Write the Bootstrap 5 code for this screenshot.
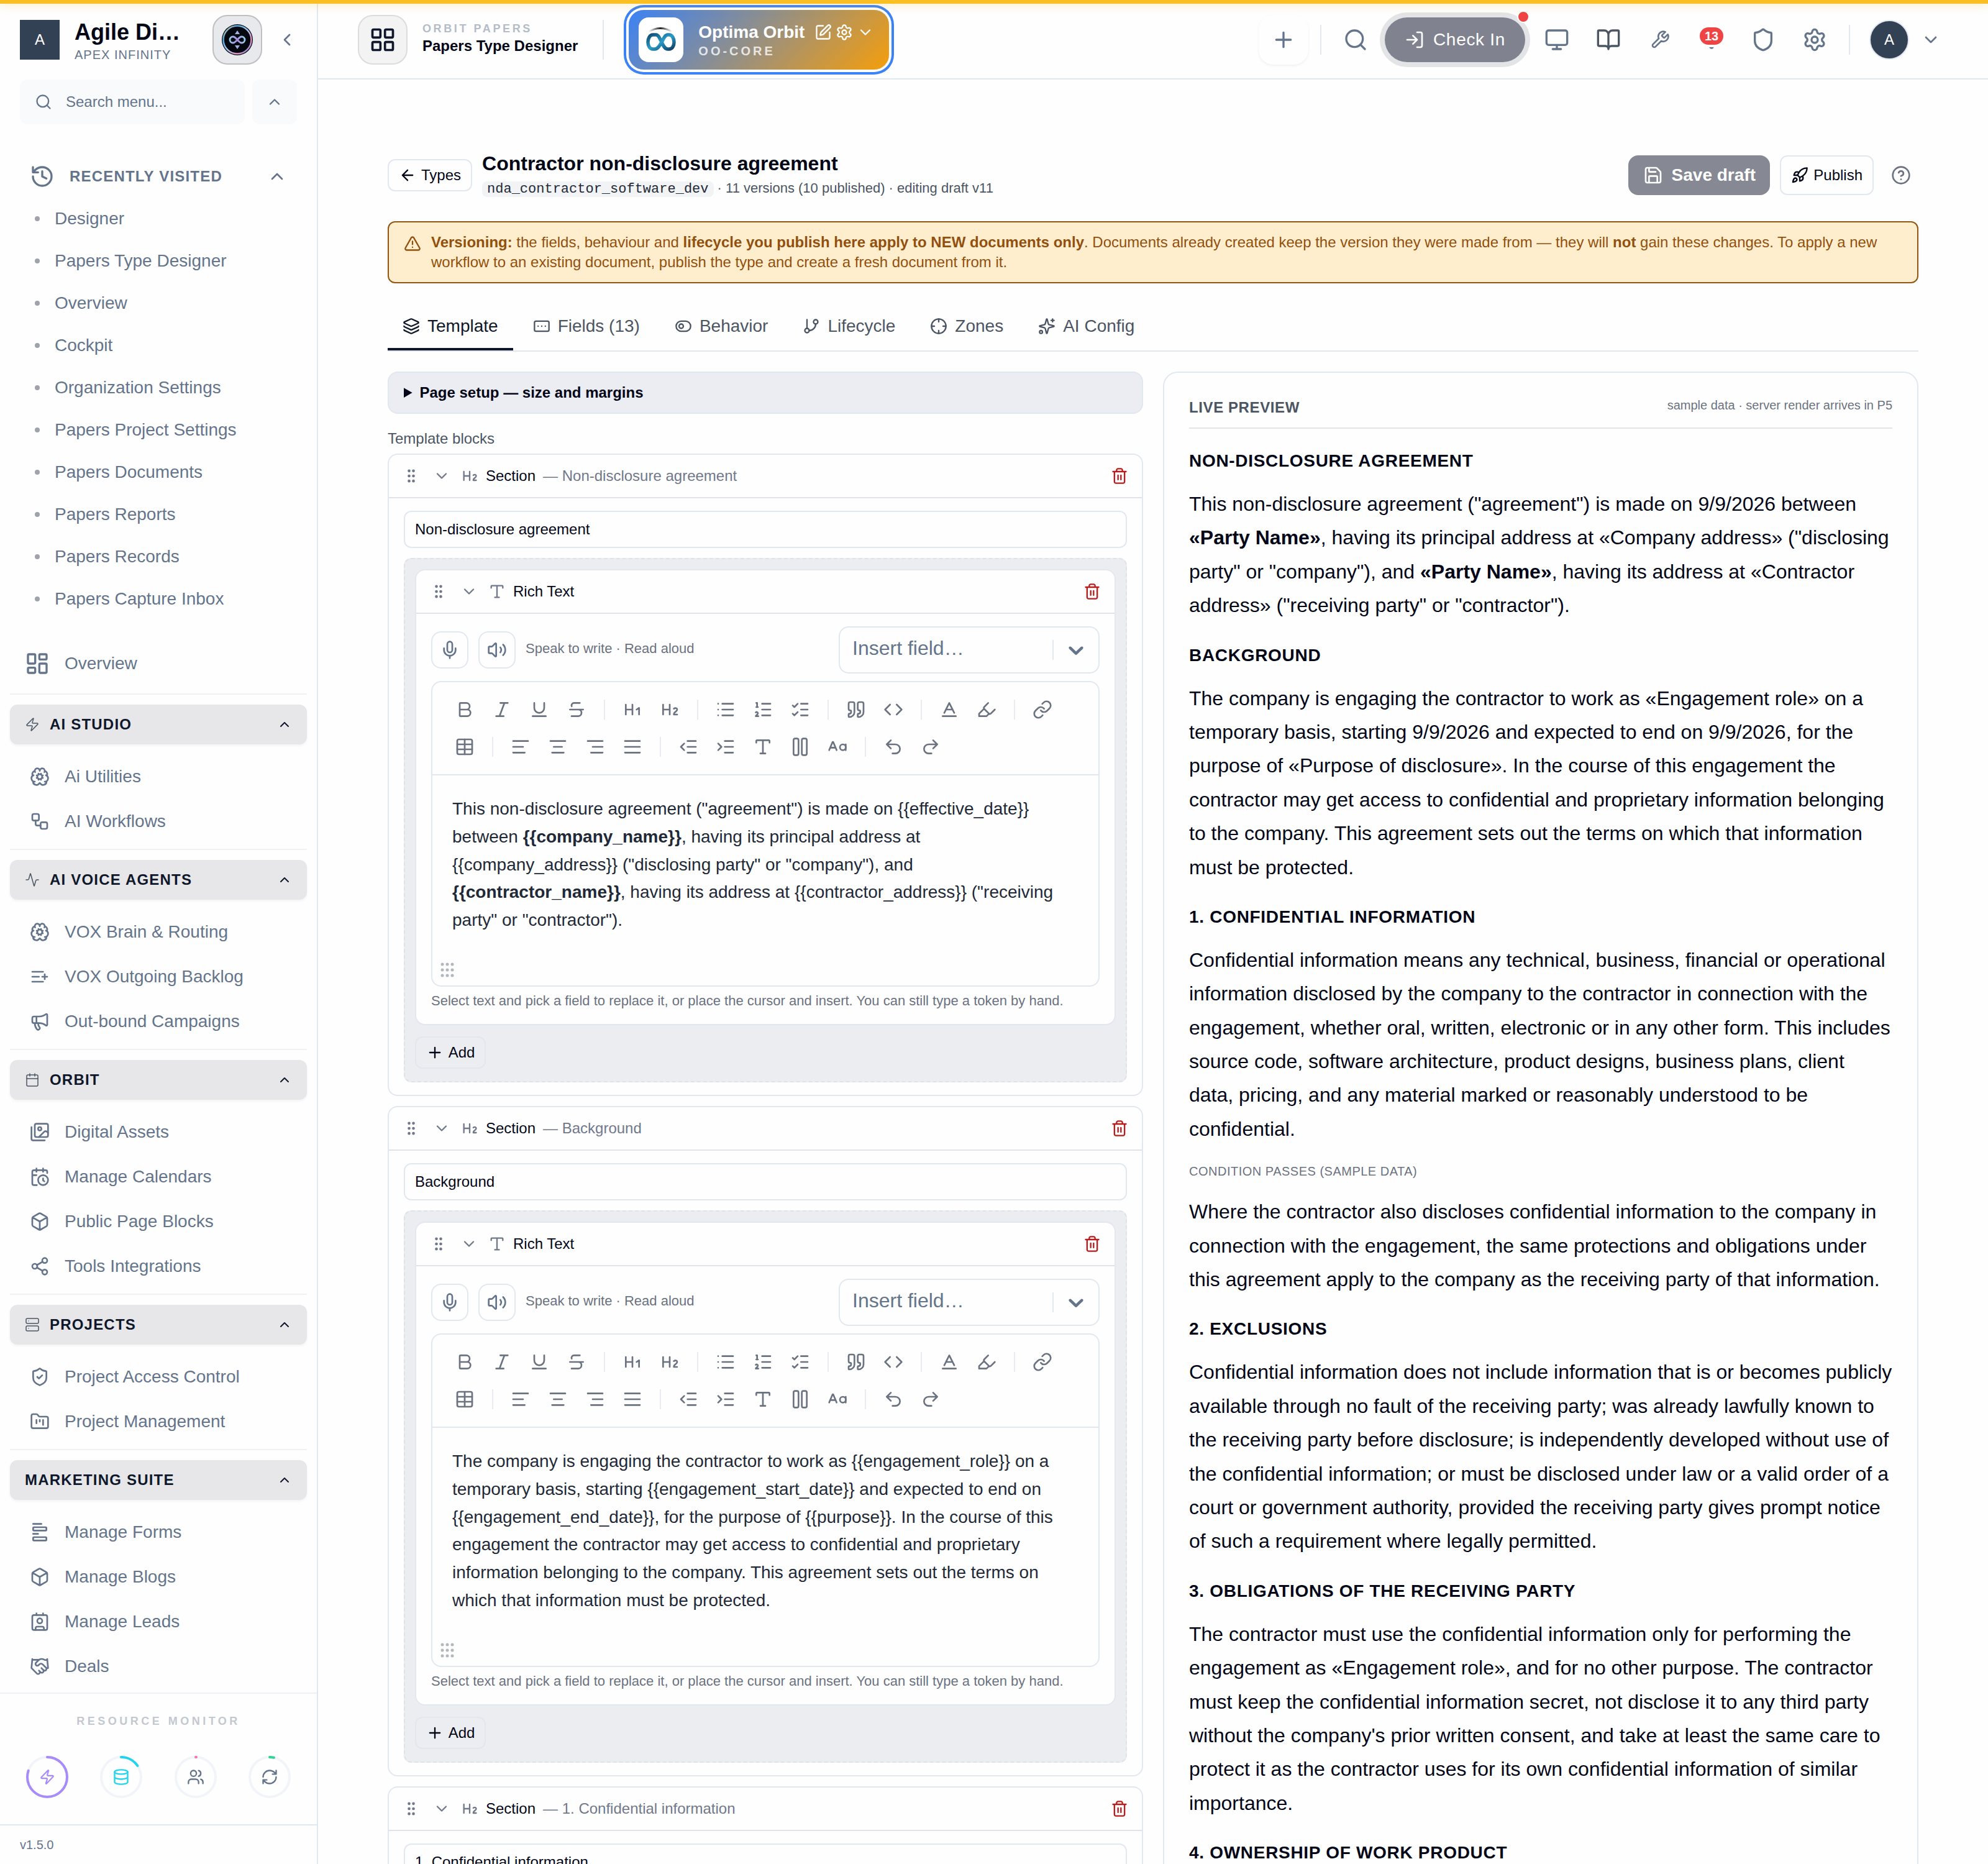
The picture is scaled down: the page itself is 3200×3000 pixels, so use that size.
<!DOCTYPE html>
<html lang="en">
<head>
<meta charset="utf-8">
<meta name="viewport" content="width=device-width, initial-scale=1">
<title>Papers Type Designer</title>
<link href="https://cdn.jsdelivr.net/npm/bootstrap@5.3.0/dist/css/bootstrap.min.css" rel="stylesheet">
<style>
:root{--line:#e2e8f0;--slate:#64748b;--ink:#020617}
body{font-family:"Liberation Sans",Arial,sans-serif;font-size:24px;line-height:32px;color:var(--ink);background:#fefefe;overflow:hidden}
a{text-decoration:none;color:inherit}
button{font:inherit;color:inherit;background:none;border:0;padding:0}
.ic{fill:none;stroke:currentColor;stroke-width:2;stroke-linecap:round;stroke-linejoin:round;flex:none;width:28px;height:28px;display:block}
.i24{width:24px;height:24px}.i32{width:32px;height:32px}.i40{width:40px;height:40px}.i44{width:44px;height:44px}
.top-strip{height:6px;background:#fbbf24;box-shadow:0 0 16px rgba(251,191,36,.5);z-index:5}
.f20{font-size:20px}.f22{font-size:22px}
.soft{color:#4b5563}
.softer{color:#6b7280}
.vbar{width:2px;background:var(--line);flex:none}

.side{width:512px;height:100vh;border-right:2px solid var(--line);color:var(--slate)}
.side-head{height:128px;padding:0 32px}
.org-mark{width:64px;height:64px;background:#334155;color:#fff}
.org-name{font-size:36px;line-height:40px;font-weight:700;color:var(--ink)}
.org-sub{font-size:20px;letter-spacing:.05em}
.org-btn{width:80px;height:80px;border:2px solid #bfbfc2;border-radius:24px;background:#e8e9ed;margin-left:50px}
.find-row{gap:12px}
.find{background:#f8fafc;border-radius:12px;height:72px;gap:22px}
.find input{border:0;background:none;outline:0;color:var(--slate);min-width:0;font-size:24px}
.find input::placeholder{color:var(--slate);opacity:1}
.find-all{width:72px}
.side-nav{padding:50px 16px 0;overflow:hidden}
.recent-head{height:68px;padding:0 32px;gap:24px;font-weight:700;letter-spacing:.05em}
.recent-list{margin-bottom:34px}
.recent-list a{height:68px;padding-left:40px;gap:24px;font-size:28px}
.recent-list a::before{content:"";width:8px;height:8px;border-radius:50%;background:#a0a3ab}
.side-item{height:72px;padding-left:32px;gap:24px;font-size:28px}
.side-item.home{padding-left:24px;margin-bottom:12px}
.grp{border-top:2px solid #eff1f4;padding:16px 0 8px}
.grp-head{height:64px;border-radius:12px;background:#e7e7ea;color:#0f172a;font-weight:700;letter-spacing:.05em;padding:0 24px;gap:16px;margin-bottom:16px;box-shadow:0 2px 4px rgba(0,0,0,.05)}
.grp-head .ic{stroke-width:1.5}
.grp-head .ic:first-child{color:#4b5563}
.grp-head .ic:last-child{color:#0f172a;stroke-width:2}
.monitor{border-top:2px solid #eef2f6;height:212px;padding:28px 40px 0;background:#fefefe}
.monitor-title{font-size:18px;font-weight:700;letter-spacing:.25em;color:#c3c8d0;margin-bottom:38px}
.ring{width:72px;height:72px;fill:none;stroke-width:4;stroke-linecap:round}
.ring .glyph{stroke:var(--slate);stroke-width:2;stroke-linejoin:round}
.version{border-top:2px solid var(--line);height:64px;padding-left:32px}

.topbar{height:128px;border-bottom:2px solid var(--line);padding:2px 76px 0 64px;color:var(--slate)}
.apps{width:80px;height:80px;border:2px solid #dcdcdc;border-radius:24px;background:#f3f3f3;color:#0f172a}
.crumb{font-size:18px;letter-spacing:.2em;font-weight:700;color:#b4bcc8;line-height:28px}
.crumb-title{line-height:28px;font-weight:700;color:var(--ink)}
.crumb-line{height:64px;margin:0 40px}
.chip{height:96px;border-radius:24px;padding:0 24px 0 16px;gap:24px;background:linear-gradient(135deg,#3b82f6,#f59e0b);box-shadow:0 0 0 4px #fff,0 0 0 8px #3b82f6;color:#fff}
.chip-logo{width:72px;height:72px;border-radius:16px;background:#fff}
.chip-row{gap:6px}
.chip-name{font-size:28px;line-height:36px;font-weight:700;margin-right:10px}
.chip-code{font-size:20px;line-height:24px;font-weight:700;letter-spacing:.2em;color:rgba(255,255,255,.8)}
.tools{gap:11px}
.tool{width:72px;height:72px}
.plus{width:80px;height:80px;border-radius:24px;box-shadow:0 2px 4px rgba(0,0,0,.06)}
.check-in{width:226px;height:72px;border-radius:36px;background:#80838f;color:#fff;box-shadow:0 0 0 8px #e2e4e5;font-size:28px;letter-spacing:.025em;gap:14px}
.dot{width:20px;height:20px;border-radius:50%;background:#ef4444;border:2px solid #fff;right:-7px;top:-11px}
.count{background:#ef4444;color:#fff;font-size:20px;line-height:28px;font-weight:700;border-radius:14px;width:38px;left:17px;top:16px;box-shadow:0 0 0 4px #fefefe}
.user{width:64px;height:64px;border-radius:50%;background:#334155;color:#fff;border:2px solid var(--line)}

.page{padding:122px 112px 0;height:calc(100vh - 128px);overflow:hidden}
.doc-row{height:64px}
.obtn{border:2px solid var(--line);border-radius:12px;color:var(--ink)}
.doc-title{font-size:32px;line-height:40px;font-weight:700;margin:0}
.doc-code{font-family:"Liberation Mono",monospace;font-size:22px;color:#1f2937;background:#f1f3f5;border-radius:8px;padding:0 8px}
.save{background:#868993;color:#fff;border-radius:16px;font-size:28px;font-weight:700;width:228px;gap:14px}
.help{margin:0 12px 0 28px}
.note{border:2px solid #905612;border-radius:12px;background:#feeecd;color:#92500f;padding:16px 24px;gap:16px;margin:42px 0 34px}
.tabs{border-bottom:2px solid var(--line);gap:8px;margin-bottom:32px}
.tabs button{height:74px;padding:0 24px;gap:12px;font-size:28px;color:#4b5563;border-bottom:4px solid transparent}
.tabs button.on{color:#0f172a;border-color:#0f172a}
.cols{display:grid;grid-template-columns:repeat(2,minmax(0,1fr));gap:32px;align-items:start}
.setup{background:#ebedf2;border:2px solid var(--line);border-radius:16px;padding:16px 24px;font-weight:700;margin-bottom:24px}
.blk{border:2px solid var(--line);border-radius:16px;background:#fefefe}
.blk-head{height:70px;border-bottom:2px solid #e0e3e8;padding:0 22px;gap:12px;color:#71788a}
.blk-head b{font-weight:400;color:var(--ink)}
.fold{width:42px;padding-left:4px}
.bin{color:#b91c1c}
.blk-body{padding:20px 24px}
.txt{height:60px;width:100%;border:2px solid var(--line);border-radius:12px;padding:0 16px;font-size:24px;color:var(--ink);background:#fefefe;margin-bottom:16px}
.nest{background:#ebedf1;border:2px dashed #dfe2e7;border-radius:12px;padding:16px 16px 20px}
.sq{width:60px;height:60px;border:2px solid var(--line);border-radius:16px;color:var(--slate)}
.pick{width:420px;height:76px;border:2px solid var(--line);border-radius:16px;color:var(--slate)}
.pick select{border:0;outline:0;background:none;appearance:none;font-size:32px;color:var(--slate);padding:0 0 6px 20px;height:72px;min-width:0}
.pick-arrow{width:72px}
.pick-arrow svg{width:40px;height:40px;fill:currentColor}
.editor{border:2px solid var(--line);border-radius:16px;margin-top:12px}
.bar{border-bottom:2px solid var(--line);padding:16px 24px;color:#6b7280}
.bar>div{gap:4px}
.bar button{width:56px;height:56px}
.bar i{width:2px;height:32px;background:#e8ebf0;margin:0 12px}
.prose{padding:32px 32px 0;font-size:28px;line-height:1.6;color:#1f2937;outline:0}
.grip{color:#b3b7c0;height:82px;padding:44px 0 0 10px}
.hint{line-height:30px;margin:8px 0 2px}
.add{height:52px;border:2px solid #e3e6ec;border-radius:12px;width:114px;gap:8px;margin-top:18px}
.preview{border:2px solid var(--line);border-radius:24px;padding:32px 40px}
.pv-head{border-bottom:2px solid #e2e4e8;height:58px;margin-bottom:32px}
.pv-label{font-weight:700;letter-spacing:.025em;line-height:48px}
.preview h3{font-size:28px;line-height:40px;font-weight:700;letter-spacing:.025em;margin:33px 0 22px}
.preview .pv-head+h3{margin-top:32px}
.preview p{font-size:32px;line-height:1.7;margin:0}
.preview .cond{font-size:20px;line-height:32px;letter-spacing:.025em;margin:25px 0 22px}
</style>
<script src="https://cdn.jsdelivr.net/npm/bootstrap@5.3.0/dist/js/bootstrap.bundle.min.js" defer></script>
</head>
<body>
<svg class="d-none" xmlns="http://www.w3.org/2000/svg">
<symbol id="search" viewBox="0 0 24 24"><circle cx="11" cy="11" r="8"/><path d="m21 21-4.3-4.3"/></symbol>
<symbol id="up" viewBox="0 0 24 24"><path d="m18 15-6-6-6 6"/></symbol>
<symbol id="down" viewBox="0 0 24 24"><path d="m6 9 6 6 6-6"/></symbol>
<symbol id="left" viewBox="0 0 24 24"><path d="m15 18-6-6 6-6"/></symbol>
<symbol id="history" viewBox="0 0 24 24"><path d="M3 12a9 9 0 1 0 9-9 9.75 9.75 0 0 0-6.74 2.74L3 8M3 3v5h5M12 7v5l4 2"/></symbol>
<symbol id="dash" viewBox="0 0 24 24"><rect x="3" y="3" width="7" height="9" rx="1"/><rect x="14" y="3" width="7" height="5" rx="1"/><rect x="14" y="12" width="7" height="9" rx="1"/><rect x="3" y="16" width="7" height="5" rx="1"/></symbol>
<symbol id="zap" viewBox="0 0 24 24"><path d="M4 14a1 1 0 0 1-.78-1.63l9.9-10.2a.5.5 0 0 1 .86.46l-1.92 6.02A1 1 0 0 0 13 10h7a1 1 0 0 1 .78 1.63l-9.9 10.2a.5.5 0 0 1-.86-.46l1.92-6.02A1 1 0 0 0 11 14z"/></symbol>
<symbol id="brain" viewBox="0 0 24 24"><path d="m10.852 14.772-.383.923M10.852 9.228l-.383-.923M13.148 14.772l.382.924M13.531 8.305l-.383.923M14.772 10.852l.923-.383M14.772 13.148l.923.383M17.598 6.5A3 3 0 1 0 12 5a3 3 0 0 0-5.63-1.446 3 3 0 0 0-.368 1.571 4 4 0 0 0-2.525 5.771M17.998 5.125a4 4 0 0 1 2.525 5.771M19.505 10.294a4 4 0 0 1-1.5 7.706M4.032 17.483A4 4 0 0 0 11.464 20c.18-.311.892-.311 1.072 0a4 4 0 0 0 7.432-2.516M4.5 10.291A4 4 0 0 0 6 18M6.002 5.125a3 3 0 0 0 .4 1.375M9.228 10.852l-.923-.383M9.228 13.148l-.923.383"/><circle cx="12" cy="12" r="3"/></symbol>
<symbol id="flow" viewBox="0 0 24 24"><rect x="3" y="3" width="8" height="8" rx="2"/><path d="M7 11v4a2 2 0 0 0 2 2h4"/><rect x="13" y="13" width="8" height="8" rx="2"/></symbol>
<symbol id="pulse" viewBox="0 0 24 24"><path d="M22 12h-2.48a2 2 0 0 0-1.93 1.46l-2.35 8.36a.25.25 0 0 1-.48 0L9.24 2.18a.25.25 0 0 0-.48 0l-2.35 8.36A2 2 0 0 1 4.49 12H2"/></symbol>
<symbol id="listplus" viewBox="0 0 24 24"><path d="M11 12H3M16 6H3M16 18H3M18 9v6M21 12h-6"/></symbol>
<symbol id="mega" viewBox="0 0 24 24"><path d="M11 6a13 13 0 0 0 8.4-2.8A1 1 0 0 1 21 4v12a1 1 0 0 1-1.6.8A13 13 0 0 0 11 14H5a2 2 0 0 1-2-2V8a2 2 0 0 1 2-2zM6 14a12 12 0 0 0 2.4 7.2 2 2 0 0 0 3.2-2.4A8 8 0 0 1 10 14M8 6v8"/></symbol>
<symbol id="cal" viewBox="0 0 24 24"><rect x="3" y="4" width="18" height="18" rx="2"/><path d="M8 2v4M16 2v4M3 10h18"/></symbol>
<symbol id="images" viewBox="0 0 24 24"><path d="M18 22H4a2 2 0 0 1-2-2V6M22 13l-1.296-1.296a2.41 2.41 0 0 0-3.408 0L11 18"/><circle cx="12" cy="8" r="2"/><rect x="6" y="2" width="16" height="16" rx="2"/></symbol>
<symbol id="calclock" viewBox="0 0 24 24"><path d="M21 7.5V6a2 2 0 0 0-2-2H5a2 2 0 0 0-2 2v14a2 2 0 0 0 2 2h3.5M16 2v4M8 2v4M3 10h5M17.5 17.5 16 16.3V14"/><circle cx="16" cy="16" r="6"/></symbol>
<symbol id="box" viewBox="0 0 24 24"><path d="M21 8a2 2 0 0 0-1-1.73l-7-4a2 2 0 0 0-2 0l-7 4A2 2 0 0 0 3 8v8a2 2 0 0 0 1 1.73l7 4a2 2 0 0 0 2 0l7-4A2 2 0 0 0 21 16ZM3.3 7l8.7 5 8.7-5M12 22V12"/></symbol>
<symbol id="share" viewBox="0 0 24 24"><circle cx="18" cy="5" r="3"/><circle cx="6" cy="12" r="3"/><circle cx="18" cy="19" r="3"/><path d="m8.59 13.51 6.83 3.98M15.41 6.51l-6.82 3.98"/></symbol>
<symbol id="server" viewBox="0 0 24 24"><rect x="2" y="2" width="20" height="8" rx="2"/><rect x="2" y="14" width="20" height="8" rx="2"/><path d="M6 6h.01M6 18h.01"/></symbol>
<symbol id="shield" viewBox="0 0 24 24"><path d="M20 13c0 5-3.5 7.5-7.66 8.95a1 1 0 0 1-.67-.01C7.5 20.5 4 18 4 13V6a1 1 0 0 1 1-1c2 0 4.5-1.2 6.24-2.72a1.17 1.17 0 0 1 1.52 0C14.51 3.81 17 5 19 5a1 1 0 0 1 1 1z"/></symbol>
<symbol id="shieldok" viewBox="0 0 24 24"><path d="M20 13c0 5-3.5 7.5-7.66 8.95a1 1 0 0 1-.67-.01C7.5 20.5 4 18 4 13V6a1 1 0 0 1 1-1c2 0 4.5-1.2 6.24-2.72a1.17 1.17 0 0 1 1.52 0C14.51 3.81 17 5 19 5a1 1 0 0 1 1 1zM9 12l2 2 4-4"/></symbol>
<symbol id="kanban" viewBox="0 0 24 24"><path d="M4 20h16a2 2 0 0 0 2-2V8a2 2 0 0 0-2-2h-7.93a2 2 0 0 1-1.66-.9l-.82-1.2A2 2 0 0 0 7.93 3H4a2 2 0 0 0-2 2v13c0 1.1.9 2 2 2ZM8 10v4M12 10v2M16 10v6"/></symbol>
<symbol id="form" viewBox="0 0 24 24"><path d="M4 14h6M4 2h10"/><rect x="4" y="18" width="16" height="4" rx="1"/><rect x="4" y="6" width="16" height="4" rx="1"/></symbol>
<symbol id="contact" viewBox="0 0 24 24"><path d="M16 2v2M7 22v-2a2 2 0 0 1 2-2h6a2 2 0 0 1 2 2v2M8 2v2"/><circle cx="12" cy="11" r="3"/><rect x="3" y="4" width="18" height="18" rx="2"/></symbol>
<symbol id="shake" viewBox="0 0 24 24"><path d="m11 17 2 2a1 1 0 1 0 3-3M14 14l2.500 2.500a1 1 0 1 0 3-3l-3.880-3.880a3 3 0 0 0-4.240 0l-.880.880a1 1 0 1 1-3-3l2.810-2.810a5.790 5.790 0 0 1 7.060-.870l.470.280a2 2 0 0 0 1.420.250L21 4M21 3l1 11h-2M3 3 2 14l6.500 6.500a1 1 0 1 0 3-3M3 4h8"/></symbol>
<symbol id="db" viewBox="0 0 24 24"><ellipse cx="12" cy="5" rx="9" ry="3"/><path d="M3 5v14a9 3 0 0 0 18 0V5M3 12a9 3 0 0 0 18 0"/></symbol>
<symbol id="users" viewBox="0 0 24 24"><path d="M16 21v-2a4 4 0 0 0-4-4H6a4 4 0 0 0-4 4v2M22 21v-2a4 4 0 0 0-3-3.870M16 3.130a4 4 0 0 1 0 7.750"/><circle cx="9" cy="7" r="4"/></symbol>
<symbol id="refresh" viewBox="0 0 24 24"><path d="M3 12a9 9 0 0 1 9-9 9.750 9.750 0 0 1 6.740 2.740L21 8M21 3v5h-5M21 12a9 9 0 0 1-9 9 9.750 9.750 0 0 1-6.740-2.740L3 16M8 16H3v5"/></symbol>
<symbol id="grid" viewBox="0 0 24 24"><rect x="3" y="3" width="7" height="7" rx="1"/><rect x="14" y="3" width="7" height="7" rx="1"/><rect x="14" y="14" width="7" height="7" rx="1"/><rect x="3" y="14" width="7" height="7" rx="1"/></symbol>
<symbol id="plus" viewBox="0 0 24 24"><path d="M5 12h14M12 5v14"/></symbol>
<symbol id="login" viewBox="0 0 24 24"><path d="m10 17 5-5-5-5M15 12H3M15 3h4a2 2 0 0 1 2 2v14a2 2 0 0 1-2 2h-4"/></symbol>
<symbol id="screen" viewBox="0 0 24 24"><rect x="2" y="3" width="20" height="14" rx="2"/><path d="M8 21h8M12 17v4"/></symbol>
<symbol id="book" viewBox="0 0 24 24"><path d="M12 7v14M3 18a1 1 0 0 1-1-1V4a1 1 0 0 1 1-1h5a4 4 0 0 1 4 4 4 4 0 0 1 4-4h5a1 1 0 0 1 1 1v13a1 1 0 0 1-1 1h-6a3 3 0 0 0-3 3 3 3 0 0 0-3-3z"/></symbol>
<symbol id="wrench" viewBox="0 0 24 24"><path d="M14.700 6.300a1 1 0 0 0 0 1.400l1.600 1.600a1 1 0 0 0 1.400 0l3.770-3.770a6 6 0 0 1-7.940 7.940l-6.910 6.910a2.120 2.120 0 0 1-3-3l6.910-6.910a6 6 0 0 1 7.940-7.940l-3.760 3.760z"/></symbol>
<symbol id="bell" viewBox="0 0 24 24"><path d="M6 8a6 6 0 0 1 12 0c0 7 3 9 3 9H3s3-2 3-9M10.300 21a1.940 1.940 0 0 0 3.400 0"/></symbol>
<symbol id="gear" viewBox="0 0 24 24"><path d="M9.671 4.136a2.340 2.340 0 0 1 4.659 0 2.340 2.340 0 0 0 3.319 1.915 2.340 2.340 0 0 1 2.330 4.033 2.340 2.340 0 0 0 0 3.831 2.340 2.340 0 0 1-2.330 4.033 2.340 2.340 0 0 0-3.319 1.915 2.340 2.340 0 0 1-4.659 0 2.340 2.340 0 0 0-3.320-1.915 2.340 2.340 0 0 1-2.330-4.033 2.340 2.340 0 0 0 0-3.831A2.340 2.340 0 0 1 6.350 6.051a2.340 2.340 0 0 0 3.319-1.915"/><circle cx="12" cy="12" r="3"/></symbol>
<symbol id="pen" viewBox="0 0 24 24"><path d="M12 3H5a2 2 0 0 0-2 2v14a2 2 0 0 0 2 2h14a2 2 0 0 0 2-2v-7M18.375 2.625a1 1 0 0 1 3 3l-9.013 9.014a2 2 0 0 1-.853.505l-2.873.84a.5.5 0 0 1-.62-.62l.84-2.873a2 2 0 0 1 .506-.852z"/></symbol>
<symbol id="back" viewBox="0 0 24 24"><path d="m12 19-7-7 7-7M19 12H5"/></symbol>
<symbol id="save" viewBox="0 0 24 24"><path d="M15.200 3a2 2 0 0 1 1.400.6l3.800 3.800a2 2 0 0 1 .6 1.400V19a2 2 0 0 1-2 2H5a2 2 0 0 1-2-2V5a2 2 0 0 1 2-2zM17 21v-7a1 1 0 0 0-1-1H8a1 1 0 0 0-1 1v7M7 3v4a1 1 0 0 0 1 1h7"/></symbol>
<symbol id="rocket" viewBox="0 0 24 24"><path d="M4.500 16.500c-1.500 1.260-2 5-2 5s3.740-.5 5-2c.71-.84.7-2.130-.09-2.910a2.180 2.180 0 0 0-2.910-.09zM12 15l-3-3a22 22 0 0 1 2-3.950A12.880 12.880 0 0 1 22 2c0 2.720-.78 7.500-6 11a22.350 22.350 0 0 1-4 2zM9 12H4s.55-3.030 2-4c1.620-1.080 5 0 5 0M12 15v5s3.030-.55 4-2c1.080-1.620 0-5 0-5"/></symbol>
<symbol id="help" viewBox="0 0 24 24"><circle cx="12" cy="12" r="10"/><path d="M9.090 9a3 3 0 0 1 5.830 1c0 2-3 3-3 3M12 17h.01"/></symbol>
<symbol id="warn" viewBox="0 0 24 24"><path d="m21.730 18-8-14a2 2 0 0 0-3.480 0l-8 14A2 2 0 0 0 4 21h16a2 2 0 0 0 1.730-3M12 9v4M12 17h.01"/></symbol>
<symbol id="layers" viewBox="0 0 24 24"><path d="M12.830 2.180a2 2 0 0 0-1.660 0L2.600 6.080a1 1 0 0 0 0 1.830l8.580 3.910a2 2 0 0 0 1.660 0l8.580-3.900a1 1 0 0 0 0-1.830zM2 12a1 1 0 0 0 .58.91l8.600 3.910a2 2 0 0 0 1.650 0l8.580-3.900A1 1 0 0 0 22 12M2 17a1 1 0 0 0 .58.91l8.600 3.910a2 2 0 0 0 1.650 0l8.580-3.900A1 1 0 0 0 22 17"/></symbol>
<symbol id="fields" viewBox="0 0 24 24"><rect x="2" y="5" width="20" height="14" rx="2"/><path d="M12 12h.01M17 12h.01M7 12h.01"/></symbol>
<symbol id="toggle" viewBox="0 0 24 24"><rect x="2" y="5" width="20" height="14" rx="7"/><circle cx="9" cy="12" r="3"/></symbol>
<symbol id="branch" viewBox="0 0 24 24"><path d="M6 3v12M18 9a9 9 0 0 1-9 9"/><circle cx="18" cy="6" r="3"/><circle cx="6" cy="18" r="3"/></symbol>
<symbol id="cross" viewBox="0 0 24 24"><circle cx="12" cy="12" r="10"/><path d="M22 12h-4M6 12H2M12 6V2M12 22v-4"/></symbol>
<symbol id="spark" viewBox="0 0 24 24"><path d="M9.937 15.500A2 2 0 0 0 8.500 14.063l-6.135-1.582a.5.5 0 0 1 0-.962L8.500 9.936A2 2 0 0 0 9.937 8.500l1.582-6.135a.5.5 0 0 1 .963 0L14.063 8.500A2 2 0 0 0 15.500 9.937l6.135 1.581a.5.5 0 0 1 0 .964L15.500 14.063a2 2 0 0 0-1.437 1.437l-1.582 6.135a.5.5 0 0 1-.963 0zM20 2v4M22 4h-4"/><circle cx="4" cy="20" r="2"/></symbol>
<symbol id="drag" viewBox="0 0 24 24"><g fill="currentColor"><circle cx="9" cy="12" r="1"/><circle cx="9" cy="5" r="1"/><circle cx="9" cy="19" r="1"/><circle cx="15" cy="12" r="1"/><circle cx="15" cy="5" r="1"/><circle cx="15" cy="19" r="1"/></g></symbol>
<symbol id="bin" viewBox="0 0 24 24"><path d="M3 6h18M19 6v14c0 1-1 2-2 2H7c-1 0-2-1-2-2V6M8 6V4c0-1 1-2 2-2h4c1 0 2 1 2 2v2M10 11v6M14 11v6"/></symbol>
<symbol id="h1" viewBox="0 0 24 24"><path d="M4 12h8M4 18V6M12 18V6M17 12l3-2v8"/></symbol>
<symbol id="h2" viewBox="0 0 24 24"><path d="M4 12h8M4 18V6M12 18V6M21 18h-4c0-4 4-3 4-6 0-1.500-2-2.500-4-1"/></symbol>
<symbol id="type" viewBox="0 0 24 24"><path d="M4 7V5a1 1 0 0 1 1-1h14a1 1 0 0 1 1 1v2M9 20h6M12 4v16"/></symbol>
<symbol id="mic" viewBox="0 0 24 24"><path d="M12 19v3M19 10v2a7 7 0 0 1-14 0v-2"/><rect x="9" y="2" width="6" height="13" rx="3"/></symbol>
<symbol id="vol" viewBox="0 0 24 24"><path d="M11 4.702a.705.705 0 0 0-1.203-.498L6.413 7.587A1.400 1.400 0 0 1 5.416 8H3a1 1 0 0 0-1 1v6a1 1 0 0 0 1 1h2.416a1.400 1.400 0 0 1 .997.413l3.383 3.384A.705.705 0 0 0 11 19.298zM16 9a5 5 0 0 1 0 6M19.364 18.364a9 9 0 0 0 0-12.728"/></symbol>
<symbol id="bold" viewBox="0 0 24 24"><path d="M6 12h9a4 4 0 0 1 0 8H7a1 1 0 0 1-1-1V5a1 1 0 0 1 1-1h7a4 4 0 0 1 0 8"/></symbol>
<symbol id="ital" viewBox="0 0 24 24"><path d="M19 4h-9M14 20H5M15 4 9 20"/></symbol>
<symbol id="under" viewBox="0 0 24 24"><path d="M6 4v6a6 6 0 0 0 12 0V4M4 20h16"/></symbol>
<symbol id="strike" viewBox="0 0 24 24"><path d="M16 4H9a3 3 0 0 0-2.830 4M14 12a4 4 0 0 1 0 8H6M4 12h16"/></symbol>
<symbol id="ul" viewBox="0 0 24 24"><path d="M3 12h.01M3 19h.01M3 5h.01M8 12h13M8 19h13M8 5h13"/></symbol>
<symbol id="ol" viewBox="0 0 24 24"><path d="M11 12h10M11 19h10M11 5h10M4 4h1v5M4 9h2M6.500 20H3.400c0-1 2.600-1.925 2.600-3.500a1.500 1.500 0 0 0-2.600-1.020"/></symbol>
<symbol id="checks" viewBox="0 0 24 24"><path d="M13 5h8M13 12h8M13 19h8M3 17l2 2 4-4M3 7l2 2 4-4"/></symbol>
<symbol id="quote" viewBox="0 0 24 24"><path d="M16 3a2 2 0 0 0-2 2v6a2 2 0 0 0 2 2 1 1 0 0 1 1 1v1a2 2 0 0 1-2 2 1 1 0 0 0-1 1v2a1 1 0 0 0 1 1 6 6 0 0 0 6-6V5a2 2 0 0 0-2-2zM5 3a2 2 0 0 0-2 2v6a2 2 0 0 0 2 2 1 1 0 0 1 1 1v1a2 2 0 0 1-2 2 1 1 0 0 0-1 1v2a1 1 0 0 0 1 1 6 6 0 0 0 6-6V5a2 2 0 0 0-2-2z"/></symbol>
<symbol id="code" viewBox="0 0 24 24"><path d="m16 18 6-6-6-6M8 6l-6 6 6 6"/></symbol>
<symbol id="color" viewBox="0 0 24 24"><path d="M4 20h16M6 16l6-12 6 12M8 12h8"/></symbol>
<symbol id="marker" viewBox="0 0 24 24"><path d="m9 11-6 6v3h9l3-3M22 12l-4.600 4.600a2 2 0 0 1-2.800 0l-5.200-5.200a2 2 0 0 1 0-2.800L14 4"/></symbol>
<symbol id="link" viewBox="0 0 24 24"><path d="M10 13a5 5 0 0 0 7.540.540l3-3a5 5 0 0 0-7.070-7.070l-1.720 1.710M14 11a5 5 0 0 0-7.540-.540l-3 3a5 5 0 0 0 7.070 7.070l1.710-1.710"/></symbol>
<symbol id="table" viewBox="0 0 24 24"><rect x="3" y="3" width="18" height="18" rx="2"/><path d="M12 3v18M3 9h18M3 15h18"/></symbol>
<symbol id="al" viewBox="0 0 24 24"><path d="M21 5H3M15 12H3M17 19H3"/></symbol>
<symbol id="ac" viewBox="0 0 24 24"><path d="M21 5H3M17 12H7M19 19H5"/></symbol>
<symbol id="ar" viewBox="0 0 24 24"><path d="M21 5H3M21 12H9M21 19H7"/></symbol>
<symbol id="aj" viewBox="0 0 24 24"><path d="M3 5h18M3 12h18M3 19h18"/></symbol>
<symbol id="outd" viewBox="0 0 24 24"><path d="M21 12H11M21 19H11M21 5H11M7 8l-4 4 4 4"/></symbol>
<symbol id="ind" viewBox="0 0 24 24"><path d="M21 12H11M21 19H11M21 5H11M3 8l4 4-4 4"/></symbol>
<symbol id="colsym" viewBox="0 0 24 24"><rect x="4" y="2" width="6" height="20" rx="2"/><rect x="14" y="2" width="6" height="20" rx="2"/></symbol>
<symbol id="aa" viewBox="0 0 24 24"><path d="m2 16 4.039-9.690a.5.5 0 0 1 .923 0L11 16M3.304 13h6.392M22 9v7"/><circle cx="18.500" cy="12.500" r="3.500"/></symbol>
<symbol id="undo" viewBox="0 0 24 24"><path d="M9 14 4 9l5-5M4 9h10.500a5.500 5.500 0 0 1 0 11H11"/></symbol>
<symbol id="redo" viewBox="0 0 24 24"><path d="m15 14 5-5-5-5M20 9H9.500a5.500 5.500 0 0 0 0 11H13"/></symbol>
<symbol id="caret" viewBox="0 0 20 20"><path d="M4.516 7.548c.436-.446 1.043-.481 1.576 0L10 11.295l3.908-3.747c.533-.481 1.141-.446 1.574 0 .436.445.408 1.197 0 1.615-.406.418-4.695 4.502-4.695 4.502a1.095 1.095 0 0 1-1.576 0S4.924 9.581 4.516 9.163s-.436-1.170 0-1.615z"/></symbol>
<symbol id="dots" viewBox="0 0 24 28"><g fill="currentColor" stroke="none"><circle cx="4" cy="4" r="2.500"/><circle cx="12" cy="4" r="2.500"/><circle cx="20" cy="4" r="2.500"/><circle cx="4" cy="13" r="2.500"/><circle cx="12" cy="13" r="2.500"/><circle cx="20" cy="13" r="2.500"/><circle cx="4" cy="22" r="2.500"/><circle cx="12" cy="22" r="2.500"/><circle cx="20" cy="22" r="2.500"/></g></symbol>
</svg>

<div class="top-strip position-fixed top-0 start-0 w-100"></div>
<div class="d-flex">

<aside class="side d-flex flex-column flex-shrink-0">
  <div class="side-head d-flex align-items-center">
    <div class="org-mark d-flex align-items-center justify-content-center flex-shrink-0">A</div>
    <div class="pt-2 ms-4 flex-grow-1 text-nowrap"><div class="org-name">Agile Di…</div><div class="org-sub">APEX INFINITY</div></div>
    <button class="org-btn d-flex align-items-center justify-content-center flex-shrink-0" aria-label="Assistant">
      <svg width="52" height="52" viewBox="0 0 52 52" fill="none">
        <defs><linearGradient id="ringc" x1="0" y1="0" x2="1" y2="1"><stop offset="0" stop-color="#f0c987"/><stop offset=".25" stop-color="#4fa8dd"/><stop offset=".5" stop-color="#a9c8f0"/><stop offset=".75" stop-color="#e58fc0"/><stop offset="1" stop-color="#4a8fd8"/></linearGradient>
        <linearGradient id="infc"><stop offset="0" stop-color="#8ccbe8"/><stop offset=".5" stop-color="#a98ee0"/><stop offset="1" stop-color="#8fd4ea"/></linearGradient></defs>
        <circle cx="26" cy="26" r="25" fill="#050711"/><circle cx="26" cy="26" r="22.500" stroke="url(#ringc)" stroke-width="2.500"/>
        <path d="M26 11l4 6h-8zM26 41l4-6h-8z" fill="#9db4e0"/>
        <path d="M26 26c-3-3.500-5-5-7-5a5 5 0 0 0 0 10c2 0 4-1.500 7-5s5-5 7-5a5 5 0 0 1 0 10c-2 0-4-1.500-7-5z" stroke="url(#infc)" stroke-width="2.800"/>
      </svg>
    </button>
    <button class="ms-4" aria-label="Collapse"><svg class="ic i32"><use href="#left"/></svg></button>
  </div>
  <div class="find-row d-flex px-4 mx-2">
    <label class="find d-flex align-items-center flex-grow-1 ps-4"><svg class="ic"><use href="#search"/></svg><input type="text" class="w-100 p-0" placeholder="Search menu..." aria-label="Search menu"></label>
    <button class="find find-all d-flex align-items-center justify-content-center flex-shrink-0" aria-label="Collapse all"><svg class="ic"><use href="#up"/></svg></button>
  </div>
  <nav class="side-nav flex-grow-1">
    <div class="recent-head d-flex align-items-center"><svg class="ic i40"><use href="#history"/></svg><span class="flex-grow-1">RECENTLY VISITED</span><svg class="ic i32"><use href="#up"/></svg></div>
    <div class="recent-list">
      <a href="#" class="d-flex align-items-center">Designer</a>
      <a href="#" class="d-flex align-items-center">Papers Type Designer</a>
      <a href="#" class="d-flex align-items-center">Overview</a>
      <a href="#" class="d-flex align-items-center">Cockpit</a>
      <a href="#" class="d-flex align-items-center">Organization Settings</a>
      <a href="#" class="d-flex align-items-center">Papers Project Settings</a>
      <a href="#" class="d-flex align-items-center">Papers Documents</a>
      <a href="#" class="d-flex align-items-center">Papers Reports</a>
      <a href="#" class="d-flex align-items-center">Papers Records</a>
      <a href="#" class="d-flex align-items-center">Papers Capture Inbox</a>
    </div>
    <a href="#" class="side-item home d-flex align-items-center"><svg class="ic i40"><use href="#dash"/></svg>Overview</a>
    <div class="grp">
      <button class="grp-head d-flex align-items-center w-100"><svg class="ic i24"><use href="#zap"/></svg><span class="flex-grow-1 text-start">AI STUDIO</span><svg class="ic i24"><use href="#up"/></svg></button>
      <a href="#" class="side-item d-flex align-items-center"><svg class="ic i32"><use href="#brain"/></svg>Ai Utilities</a>
      <a href="#" class="side-item d-flex align-items-center"><svg class="ic i32"><use href="#flow"/></svg>AI Workflows</a>
    </div>
    <div class="grp">
      <button class="grp-head d-flex align-items-center w-100"><svg class="ic i24"><use href="#pulse"/></svg><span class="flex-grow-1 text-start">AI VOICE AGENTS</span><svg class="ic i24"><use href="#up"/></svg></button>
      <a href="#" class="side-item d-flex align-items-center"><svg class="ic i32"><use href="#brain"/></svg>VOX Brain &amp; Routing</a>
      <a href="#" class="side-item d-flex align-items-center"><svg class="ic i32"><use href="#listplus"/></svg>VOX Outgoing Backlog</a>
      <a href="#" class="side-item d-flex align-items-center"><svg class="ic i32"><use href="#mega"/></svg>Out-bound Campaigns</a>
    </div>
    <div class="grp">
      <button class="grp-head d-flex align-items-center w-100"><svg class="ic i24"><use href="#cal"/></svg><span class="flex-grow-1 text-start">ORBIT</span><svg class="ic i24"><use href="#up"/></svg></button>
      <a href="#" class="side-item d-flex align-items-center"><svg class="ic i32"><use href="#images"/></svg>Digital Assets</a>
      <a href="#" class="side-item d-flex align-items-center"><svg class="ic i32"><use href="#calclock"/></svg>Manage Calendars</a>
      <a href="#" class="side-item d-flex align-items-center"><svg class="ic i32"><use href="#box"/></svg>Public Page Blocks</a>
      <a href="#" class="side-item d-flex align-items-center"><svg class="ic i32"><use href="#share"/></svg>Tools Integrations</a>
    </div>
    <div class="grp">
      <button class="grp-head d-flex align-items-center w-100"><svg class="ic i24"><use href="#server"/></svg><span class="flex-grow-1 text-start">PROJECTS</span><svg class="ic i24"><use href="#up"/></svg></button>
      <a href="#" class="side-item d-flex align-items-center"><svg class="ic i32"><use href="#shieldok"/></svg>Project Access Control</a>
      <a href="#" class="side-item d-flex align-items-center"><svg class="ic i32"><use href="#kanban"/></svg>Project Management</a>
    </div>
    <div class="grp">
      <button class="grp-head d-flex align-items-center w-100"><span class="flex-grow-1 text-start">MARKETING SUITE</span><svg class="ic i24"><use href="#up"/></svg></button>
      <a href="#" class="side-item d-flex align-items-center"><svg class="ic i32"><use href="#form"/></svg>Manage Forms</a>
      <a href="#" class="side-item d-flex align-items-center"><svg class="ic i32"><use href="#box"/></svg>Manage Blogs</a>
      <a href="#" class="side-item d-flex align-items-center"><svg class="ic i32"><use href="#contact"/></svg>Manage Leads</a>
      <a href="#" class="side-item d-flex align-items-center"><svg class="ic i32"><use href="#shake"/></svg>Deals</a>
    </div>
  </nav>
  <div class="monitor flex-shrink-0">
    <div class="monitor-title text-center">RESOURCE MONITOR</div>
    <div class="d-flex justify-content-between">
      <svg class="ring" viewBox="0 0 72 72"><circle cx="36" cy="36" r="32" stroke="#f1f4f8"/><circle cx="36" cy="36" r="32" stroke="#a78bfa" stroke-dasharray="161 202" transform="rotate(-90 36 36)"/><svg class="glyph" x="23" y="23" width="26" height="26"><use href="#zap" stroke="#a78bfa"/></svg></svg>
      <svg class="ring" viewBox="0 0 72 72"><circle cx="36" cy="36" r="32" stroke="#f1f4f8"/><circle cx="36" cy="36" r="32" stroke="#22d3ee" stroke-dasharray="31 202" transform="rotate(-90 36 36)"/><svg class="glyph" x="22" y="22" width="28" height="28"><use href="#db" stroke="#22d3ee"/></svg></svg>
      <svg class="ring" viewBox="0 0 72 72"><circle cx="36" cy="36" r="32" stroke="#f1f4f8"/><circle cx="36" cy="36" r="32" stroke="#f472b6" stroke-dasharray="1 202" transform="rotate(-90 36 36)"/><svg class="glyph" x="22" y="22" width="28" height="28"><use href="#users"/></svg></svg>
      <svg class="ring" viewBox="0 0 72 72"><circle cx="36" cy="36" r="32" stroke="#f1f4f8"/><circle cx="36" cy="36" r="32" stroke="#34d399" stroke-dasharray="7 202" transform="rotate(-90 36 36)"/><svg class="glyph" x="22" y="22" width="28" height="28"><use href="#refresh"/></svg></svg>
    </div>
  </div>
  <div class="version f20 d-flex align-items-center flex-shrink-0">v1.5.0</div>
</aside>

<div class="flex-grow-1 overflow-hidden">
  <header class="topbar d-flex align-items-center justify-content-between">
    <div class="d-flex align-items-center">
      <button class="apps d-flex align-items-center justify-content-center me-4" aria-label="Apps"><svg class="ic i44"><use href="#grid"/></svg></button>
      <div class="text-nowrap pb-2"><div class="crumb">ORBIT PAPERS</div><div class="crumb-title">Papers Type Designer</div></div>
      <span class="vbar crumb-line"></span>
      <div class="chip d-flex align-items-center">
        <div class="chip-logo d-flex align-items-center justify-content-center">
          <svg width="52" height="44" viewBox="0 0 52 44" fill="none">
            <defs><linearGradient id="lg" x1="0" y1="0" x2="1" y2="1"><stop offset="0" stop-color="#0f4c75"/><stop offset=".5" stop-color="#2a9cc8"/><stop offset="1" stop-color="#0e3f66"/></linearGradient>
            <linearGradient id="arcg"><stop offset="0" stop-color="#fff"/><stop offset=".5" stop-color="#222"/><stop offset="1" stop-color="#fff"/></linearGradient></defs>
            <path d="M6 9Q25-2 44 9" stroke="url(#arcg)" stroke-width="3"/>
            <path d="M18 14h-5C8 14 5 20 5 26s3 11 8 11h3c5 0 8-6 11-11s5-12 10-12h2c5 0 8 6 8 12s-3 11-8 11h-2c-5 0-7-5-10-11s-5-12-9-12z" stroke="url(#lg)" stroke-width="5.500"/>
          </svg>
        </div>
        <div>
          <div class="chip-row d-flex align-items-center"><span class="chip-name">Optima Orbit</span><svg class="ic"><use href="#pen"/></svg><svg class="ic"><use href="#gear"/></svg><svg class="ic"><use href="#down"/></svg></div>
          <div class="chip-code">OO-CORE</div>
        </div>
      </div>
    </div>
    <div class="tools d-flex align-items-center">
      <button class="plus d-flex align-items-center justify-content-center" aria-label="Create"><svg class="ic i40"><use href="#plus"/></svg></button>
      <span class="vbar py-4 mx-2"></span>
      <button class="tool d-flex align-items-center justify-content-center" aria-label="Search"><svg class="ic i40"><use href="#search"/></svg></button>
      <button class="check-in position-relative d-flex align-items-center justify-content-center me-1"><svg class="ic i32"><use href="#login"/></svg>Check In<span class="dot position-absolute"></span></button>
      <button class="tool d-flex align-items-center justify-content-center" aria-label="Display"><svg class="ic i40"><use href="#screen"/></svg></button>
      <button class="tool soft d-flex align-items-center justify-content-center" aria-label="Guide"><svg class="ic i40"><use href="#book"/></svg></button>
      <button class="tool d-flex align-items-center justify-content-center" aria-label="Tools"><svg class="ic i32"><use href="#wrench"/></svg></button>
      <button class="tool position-relative d-flex align-items-center justify-content-center" aria-label="Notifications"><svg class="ic i32"><use href="#bell"/></svg><span class="count position-absolute">13</span></button>
      <button class="tool d-flex align-items-center justify-content-center" aria-label="Security"><svg class="ic i40"><use href="#shield"/></svg></button>
      <button class="tool d-flex align-items-center justify-content-center" aria-label="Settings"><svg class="ic i40"><use href="#gear"/></svg></button>
      <span class="vbar py-4 ms-2 me-3"></span>
      <button class="user ms-1" aria-label="Account">A</button>
      <svg class="ic i32 ms-2"><use href="#down"/></svg>
    </div>
  </header>

  <main class="page">
    <div class="doc-row d-flex align-items-center">
      <button class="obtn d-flex align-items-center justify-content-center gap-2 px-3 py-2"><svg class="ic"><use href="#back"/></svg>Types</button>
      <div class="ms-3 flex-grow-1">
        <h1 class="doc-title">Contractor non-disclosure agreement</h1>
        <div class="f22 soft mt-1"><code class="doc-code">nda_contractor_software_dev</code> · 11 versions (10 published) · editing draft v11</div>
      </div>
      <button class="save d-flex align-items-center justify-content-center align-self-stretch me-3"><svg class="ic i32"><use href="#save"/></svg>Save draft</button>
      <button class="obtn d-flex align-items-center align-self-stretch px-3 gap-2"><svg class="ic"><use href="#rocket"/></svg>Publish</button>
      <button class="help softer" aria-label="Help"><svg class="ic i32"><use href="#help"/></svg></button>
    </div>

    <div class="note d-flex"><svg class="ic mt-1"><use href="#warn"/></svg><div><strong>Versioning:</strong> the fields, behaviour and <strong>lifecycle you publish here apply to NEW documents only</strong>. Documents already created keep the version they were made from — they will <strong>not</strong> gain these changes. To apply a new workflow to an existing document, publish the type and create a fresh document from it.</div></div>

    <div class="tabs d-flex" role="tablist">
      <button role="tab" class="on d-flex align-items-center"><svg class="ic"><use href="#layers"/></svg>Template</button>
      <button role="tab" class="d-flex align-items-center"><svg class="ic"><use href="#fields"/></svg>Fields (13)</button>
      <button role="tab" class="d-flex align-items-center"><svg class="ic"><use href="#toggle"/></svg>Behavior</button>
      <button role="tab" class="d-flex align-items-center"><svg class="ic"><use href="#branch"/></svg>Lifecycle</button>
      <button role="tab" class="d-flex align-items-center"><svg class="ic"><use href="#cross"/></svg>Zones</button>
      <button role="tab" class="d-flex align-items-center"><svg class="ic"><use href="#spark"/></svg>AI Config</button>
    </div>

    <div class="cols">
      <div>
        <details class="setup"><summary>Page setup — size and margins</summary></details>
        <div class="mb-2 soft">Template blocks</div>

        <section class="blk mb-3">
          <div class="blk-head d-flex align-items-center"><svg class="ic"><use href="#drag"/></svg><button class="fold d-flex justify-content-center" aria-label="Fold"><svg class="ic"><use href="#down"/></svg></button><svg class="ic"><use href="#h2"/></svg><b>Section</b><span class="flex-grow-1">— Non-disclosure agreement</span><button class="bin" aria-label="Delete"><svg class="ic"><use href="#bin"/></svg></button></div>
          <div class="blk-body">
            <input class="txt" type="text" aria-label="Section title" value="Non-disclosure agreement">
            <div class="nest">
              <div class="blk">
                <div class="blk-head d-flex align-items-center"><svg class="ic"><use href="#drag"/></svg><button class="fold d-flex justify-content-center" aria-label="Fold"><svg class="ic"><use href="#down"/></svg></button><svg class="ic"><use href="#type"/></svg><b class="flex-grow-1">Rich Text</b><button class="bin" aria-label="Delete"><svg class="ic"><use href="#bin"/></svg></button></div>
                <div class="blk-body">
                  <div class="d-flex align-items-center">
                    <button class="sq d-flex align-items-center justify-content-center me-3" aria-label="Dictate"><svg class="ic i32"><use href="#mic"/></svg></button>
                    <button class="sq d-flex align-items-center justify-content-center me-3" aria-label="Read aloud"><svg class="ic i32"><use href="#vol"/></svg></button>
                    <span class="f22 softer flex-grow-1 pb-1">Speak to write · Read aloud</span>
                    <div class="pick d-flex align-items-center"><select class="flex-grow-1" aria-label="Insert field"><option>Insert field…</option></select><span class="vbar py-3 my-1"></span><span class="pick-arrow d-flex justify-content-center"><svg><use href="#caret"/></svg></span></div>
                  </div>
                  <div class="editor">
                    <div class="bar">
                      <div class="d-flex align-items-center mb-1">
                        <button class="d-flex align-items-center justify-content-center" aria-label="Bold"><svg class="ic i32"><use href="#bold"/></svg></button>
                        <button class="d-flex align-items-center justify-content-center" aria-label="Italic"><svg class="ic i32"><use href="#ital"/></svg></button>
                        <button class="d-flex align-items-center justify-content-center" aria-label="Underline"><svg class="ic i32"><use href="#under"/></svg></button>
                        <button class="d-flex align-items-center justify-content-center" aria-label="Strikethrough"><svg class="ic i32"><use href="#strike"/></svg></button><i></i>
                        <button class="d-flex align-items-center justify-content-center" aria-label="Heading 1"><svg class="ic i32"><use href="#h1"/></svg></button>
                        <button class="d-flex align-items-center justify-content-center" aria-label="Heading 2"><svg class="ic i32"><use href="#h2"/></svg></button><i></i>
                        <button class="d-flex align-items-center justify-content-center" aria-label="Bullets"><svg class="ic i32"><use href="#ul"/></svg></button>
                        <button class="d-flex align-items-center justify-content-center" aria-label="Numbers"><svg class="ic i32"><use href="#ol"/></svg></button>
                        <button class="d-flex align-items-center justify-content-center" aria-label="Checklist"><svg class="ic i32"><use href="#checks"/></svg></button><i></i>
                        <button class="d-flex align-items-center justify-content-center" aria-label="Quote"><svg class="ic i32"><use href="#quote"/></svg></button>
                        <button class="d-flex align-items-center justify-content-center" aria-label="Code"><svg class="ic i32"><use href="#code"/></svg></button><i></i>
                        <button class="d-flex align-items-center justify-content-center" aria-label="Text colour"><svg class="ic i32"><use href="#color"/></svg></button>
                        <button class="d-flex align-items-center justify-content-center" aria-label="Highlight"><svg class="ic i32"><use href="#marker"/></svg></button><i></i>
                        <button class="d-flex align-items-center justify-content-center" aria-label="Link"><svg class="ic i32"><use href="#link"/></svg></button>
                      </div>
                      <div class="d-flex align-items-center">
                        <button class="d-flex align-items-center justify-content-center" aria-label="Table"><svg class="ic i32"><use href="#table"/></svg></button><i></i>
                        <button class="d-flex align-items-center justify-content-center" aria-label="Align left"><svg class="ic i32"><use href="#al"/></svg></button>
                        <button class="d-flex align-items-center justify-content-center" aria-label="Align centre"><svg class="ic i32"><use href="#ac"/></svg></button>
                        <button class="d-flex align-items-center justify-content-center" aria-label="Align right"><svg class="ic i32"><use href="#ar"/></svg></button>
                        <button class="d-flex align-items-center justify-content-center" aria-label="Justify"><svg class="ic i32"><use href="#aj"/></svg></button><i></i>
                        <button class="d-flex align-items-center justify-content-center" aria-label="Outdent"><svg class="ic i32"><use href="#outd"/></svg></button>
                        <button class="d-flex align-items-center justify-content-center" aria-label="Indent"><svg class="ic i32"><use href="#ind"/></svg></button>
                        <button class="d-flex align-items-center justify-content-center" aria-label="Font"><svg class="ic i32"><use href="#type"/></svg></button>
                        <button class="d-flex align-items-center justify-content-center" aria-label="Columns"><svg class="ic i32"><use href="#colsym"/></svg></button>
                        <button class="d-flex align-items-center justify-content-center" aria-label="Case"><svg class="ic i32"><use href="#aa"/></svg></button><i></i>
                        <button class="d-flex align-items-center justify-content-center" aria-label="Undo"><svg class="ic i32"><use href="#undo"/></svg></button>
                        <button class="d-flex align-items-center justify-content-center" aria-label="Redo"><svg class="ic i32"><use href="#redo"/></svg></button>
                      </div>
                    </div>
                    <div class="prose" contenteditable="true" spellcheck="false" role="textbox" aria-label="Rich text">This non-disclosure agreement ("agreement") is made on {{effective_date}} between <strong>{{company_name}}</strong>, having its principal address at {{company_address}} ("disclosing party" or "company"), and <strong>{{contractor_name}}</strong>, having its address at {{contractor_address}} ("receiving party" or "contractor").</div>
                    <div class="grip"><svg class="ic"><use href="#dots"/></svg></div>
                  </div>
                  <div class="hint f22 softer">Select text and pick a field to replace it, or place the cursor and insert. You can still type a token by hand.</div>
                </div>
              </div>
              <button class="add d-flex align-items-center justify-content-center"><svg class="ic"><use href="#plus"/></svg>Add</button>
            </div>
          </div>
        </section>

        <section class="blk mb-3">
          <div class="blk-head d-flex align-items-center"><svg class="ic"><use href="#drag"/></svg><button class="fold d-flex justify-content-center" aria-label="Fold"><svg class="ic"><use href="#down"/></svg></button><svg class="ic"><use href="#h2"/></svg><b>Section</b><span class="flex-grow-1">— Background</span><button class="bin" aria-label="Delete"><svg class="ic"><use href="#bin"/></svg></button></div>
          <div class="blk-body">
            <input class="txt" type="text" aria-label="Section title" value="Background">
            <div class="nest">
              <div class="blk">
                <div class="blk-head d-flex align-items-center"><svg class="ic"><use href="#drag"/></svg><button class="fold d-flex justify-content-center" aria-label="Fold"><svg class="ic"><use href="#down"/></svg></button><svg class="ic"><use href="#type"/></svg><b class="flex-grow-1">Rich Text</b><button class="bin" aria-label="Delete"><svg class="ic"><use href="#bin"/></svg></button></div>
                <div class="blk-body">
                  <div class="d-flex align-items-center">
                    <button class="sq d-flex align-items-center justify-content-center me-3" aria-label="Dictate"><svg class="ic i32"><use href="#mic"/></svg></button>
                    <button class="sq d-flex align-items-center justify-content-center me-3" aria-label="Read aloud"><svg class="ic i32"><use href="#vol"/></svg></button>
                    <span class="f22 softer flex-grow-1 pb-1">Speak to write · Read aloud</span>
                    <div class="pick d-flex align-items-center"><select class="flex-grow-1" aria-label="Insert field"><option>Insert field…</option></select><span class="vbar py-3 my-1"></span><span class="pick-arrow d-flex justify-content-center"><svg><use href="#caret"/></svg></span></div>
                  </div>
                  <div class="editor">
                    <div class="bar">
                      <div class="d-flex align-items-center mb-1">
                        <button class="d-flex align-items-center justify-content-center" aria-label="Bold"><svg class="ic i32"><use href="#bold"/></svg></button>
                        <button class="d-flex align-items-center justify-content-center" aria-label="Italic"><svg class="ic i32"><use href="#ital"/></svg></button>
                        <button class="d-flex align-items-center justify-content-center" aria-label="Underline"><svg class="ic i32"><use href="#under"/></svg></button>
                        <button class="d-flex align-items-center justify-content-center" aria-label="Strikethrough"><svg class="ic i32"><use href="#strike"/></svg></button><i></i>
                        <button class="d-flex align-items-center justify-content-center" aria-label="Heading 1"><svg class="ic i32"><use href="#h1"/></svg></button>
                        <button class="d-flex align-items-center justify-content-center" aria-label="Heading 2"><svg class="ic i32"><use href="#h2"/></svg></button><i></i>
                        <button class="d-flex align-items-center justify-content-center" aria-label="Bullets"><svg class="ic i32"><use href="#ul"/></svg></button>
                        <button class="d-flex align-items-center justify-content-center" aria-label="Numbers"><svg class="ic i32"><use href="#ol"/></svg></button>
                        <button class="d-flex align-items-center justify-content-center" aria-label="Checklist"><svg class="ic i32"><use href="#checks"/></svg></button><i></i>
                        <button class="d-flex align-items-center justify-content-center" aria-label="Quote"><svg class="ic i32"><use href="#quote"/></svg></button>
                        <button class="d-flex align-items-center justify-content-center" aria-label="Code"><svg class="ic i32"><use href="#code"/></svg></button><i></i>
                        <button class="d-flex align-items-center justify-content-center" aria-label="Text colour"><svg class="ic i32"><use href="#color"/></svg></button>
                        <button class="d-flex align-items-center justify-content-center" aria-label="Highlight"><svg class="ic i32"><use href="#marker"/></svg></button><i></i>
                        <button class="d-flex align-items-center justify-content-center" aria-label="Link"><svg class="ic i32"><use href="#link"/></svg></button>
                      </div>
                      <div class="d-flex align-items-center">
                        <button class="d-flex align-items-center justify-content-center" aria-label="Table"><svg class="ic i32"><use href="#table"/></svg></button><i></i>
                        <button class="d-flex align-items-center justify-content-center" aria-label="Align left"><svg class="ic i32"><use href="#al"/></svg></button>
                        <button class="d-flex align-items-center justify-content-center" aria-label="Align centre"><svg class="ic i32"><use href="#ac"/></svg></button>
                        <button class="d-flex align-items-center justify-content-center" aria-label="Align right"><svg class="ic i32"><use href="#ar"/></svg></button>
                        <button class="d-flex align-items-center justify-content-center" aria-label="Justify"><svg class="ic i32"><use href="#aj"/></svg></button><i></i>
                        <button class="d-flex align-items-center justify-content-center" aria-label="Outdent"><svg class="ic i32"><use href="#outd"/></svg></button>
                        <button class="d-flex align-items-center justify-content-center" aria-label="Indent"><svg class="ic i32"><use href="#ind"/></svg></button>
                        <button class="d-flex align-items-center justify-content-center" aria-label="Font"><svg class="ic i32"><use href="#type"/></svg></button>
                        <button class="d-flex align-items-center justify-content-center" aria-label="Columns"><svg class="ic i32"><use href="#colsym"/></svg></button>
                        <button class="d-flex align-items-center justify-content-center" aria-label="Case"><svg class="ic i32"><use href="#aa"/></svg></button><i></i>
                        <button class="d-flex align-items-center justify-content-center" aria-label="Undo"><svg class="ic i32"><use href="#undo"/></svg></button>
                        <button class="d-flex align-items-center justify-content-center" aria-label="Redo"><svg class="ic i32"><use href="#redo"/></svg></button>
                      </div>
                    </div>
                    <div class="prose" contenteditable="true" spellcheck="false" role="textbox" aria-label="Rich text">The company is engaging the contractor to work as {{engagement_role}} on a temporary basis, starting {{engagement_start_date}} and expected to end on {{engagement_end_date}}, for the purpose of {{purpose}}. In the course of this engagement the contractor may get access to confidential and proprietary information belonging to the company. This agreement sets out the terms on which that information must be protected.</div>
                    <div class="grip"><svg class="ic"><use href="#dots"/></svg></div>
                  </div>
                  <div class="hint f22 softer">Select text and pick a field to replace it, or place the cursor and insert. You can still type a token by hand.</div>
                </div>
              </div>
              <button class="add d-flex align-items-center justify-content-center"><svg class="ic"><use href="#plus"/></svg>Add</button>
            </div>
          </div>
        </section>

        <section class="blk">
          <div class="blk-head d-flex align-items-center"><svg class="ic"><use href="#drag"/></svg><button class="fold d-flex justify-content-center" aria-label="Fold"><svg class="ic"><use href="#down"/></svg></button><svg class="ic"><use href="#h2"/></svg><b>Section</b><span class="flex-grow-1">— 1. Confidential information</span><button class="bin" aria-label="Delete"><svg class="ic"><use href="#bin"/></svg></button></div>
          <div class="blk-body"><input class="txt" type="text" aria-label="Section title" value="1. Confidential information"></div>
        </section>
      </div>

      <article class="preview">
        <div class="pv-head d-flex justify-content-between"><span class="pv-label soft">LIVE PREVIEW</span><span class="f20 softer pt-1">sample data · server render arrives in P5</span></div>
        <h3>NON-DISCLOSURE AGREEMENT</h3>
        <p>This non-disclosure agreement ("agreement") is made on 9/9/2026 between <strong>«Party Name»</strong>, having its principal address at «Company address» ("disclosing party" or "company"), and <strong>«Party Name»</strong>, having its address at «Contractor address» ("receiving party" or "contractor").</p>
        <h3>BACKGROUND</h3>
        <p>The company is engaging the contractor to work as «Engagement role» on a temporary basis, starting 9/9/2026 and expected to end on 9/9/2026, for the purpose of «Purpose of disclosure». In the course of this engagement the contractor may get access to confidential and proprietary information belonging to the company. This agreement sets out the terms on which that information must be protected.</p>
        <h3>1. CONFIDENTIAL INFORMATION</h3>
        <p>Confidential information means any technical, business, financial or operational information disclosed by the company to the contractor in connection with the engagement, whether oral, written, electronic or in any other form. This includes source code, software architecture, product designs, business plans, client data, pricing, and any material marked or reasonably understood to be confidential.</p>
        <div class="cond softer">CONDITION PASSES (SAMPLE DATA)</div>
        <p>Where the contractor also discloses confidential information to the company in connection with the engagement, the same protections and obligations under this agreement apply to the company as the receiving party of that information.</p>
        <h3>2. EXCLUSIONS</h3>
        <p>Confidential information does not include information that is or becomes publicly available through no fault of the receiving party; was already lawfully known to the receiving party before disclosure; is independently developed without use of the confidential information; or must be disclosed under law or a valid order of a court or government authority, provided the receiving party gives prompt notice of such a requirement where legally permitted.</p>
        <h3>3. OBLIGATIONS OF THE RECEIVING PARTY</h3>
        <p>The contractor must use the confidential information only for performing the engagement as «Engagement role», and for no other purpose. The contractor must keep the confidential information secret, not disclose it to any third party without the company's prior written consent, and take at least the same care to protect it as the contractor uses for its own confidential information of similar importance.</p>
        <h3>4. OWNERSHIP OF WORK PRODUCT</h3>
      </article>
    </div>
  </main>
</div>
</div>
</body>
</html>
